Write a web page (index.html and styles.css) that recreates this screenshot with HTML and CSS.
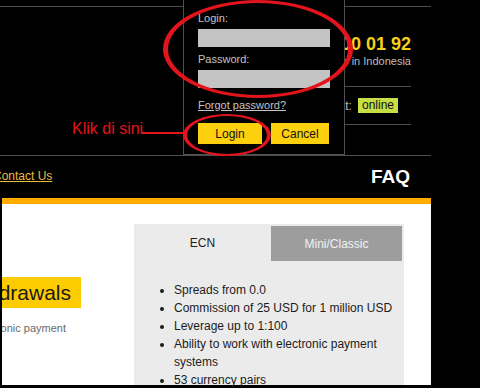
FILE: index.html
```html
<!DOCTYPE html>
<html lang="en">
<head>
    <meta charset="UTF-8">
    <meta name="viewport" content="width=device-width, initial-scale=1.0">
    <title>Login</title>
    <link rel="stylesheet" href="styles.css">
</head>
<body>
    <div class="site">
        <header class="header">
            <div class="header-top">
                <div class="info">
                    <div class="phone">8 800 200 01 92</div>
                    <div class="phone-note">Toll-free in Indonesia</div>
                    <div class="chat">Live chat: <span class="online">online</span></div>
                </div>
            </div>
            <nav class="nav">
                <a class="contact" href="#">Contact Us</a>
                <a class="faq" href="#">FAQ</a>
            </nav>

            <!-- login dropdown -->
            <form class="login-popup">
                <label class="field-label">Login:</label>
                <div class="field"></div>
                <label class="field-label second">Password:</label>
                <div class="field"></div>
                <a class="forgot" href="#">Forgot password?</a>
                <div class="login-buttons">
                    <button type="button" class="btn-login">Login</button>
                    <button type="button" class="btn-cancel">Cancel</button>
                </div>
            </form>
        </header>

        <div class="stripe"></div>

        <main class="main">
            <div class="left-col">
                <div class="title-box"><span>Withdrawals</span></div>
                <div class="title-note"><span>Deposits via electronic payment</span></div>
            </div>
            <div class="tabs">
                <div class="tab-row">
                    <div class="tab active">ECN</div>
                    <div class="tab">Mini/Classic</div>
                </div>
                <ul class="features">
                    <li>Spreads from 0.0</li>
                    <li>Commission of 25 USD for 1 million USD</li>
                    <li>Leverage up to 1:100</li>
                    <li>Ability to work with electronic payment systems</li>
                    <li>53 currency pairs</li>
                </ul>
            </div>
        </main>

        <!-- red hand-drawn annotation -->
        <svg class="marks" width="480" height="388" viewBox="0 0 480 388">
            <path fill="#e3141c" fill-rule="evenodd"
                d="M163 49 A95 49 0 1 0 353 49 A95 49 0 1 0 163 49 Z
                   M168 49 A90 46 0 1 0 348 49 A90 46 0 1 0 168 49 Z"/>
            <path fill="#e3141c" fill-rule="evenodd"
                d="M183 135 A44 21 0 1 0 271 135 A44 21 0 1 0 183 135 Z
                   M187 135 A40 19 0 1 0 267 135 A40 19 0 1 0 187 135 Z"/>
        </svg>
        <div class="klik">Klik di sini</div>
        <div class="klik-line"></div>
    </div>
</body>
</html>
```

FILE: styles.css
```css
body {
    margin: 0;
    background-color: #000;
    font-family: "Liberation Sans", Arial, sans-serif;
    width: 480px;
    height: 388px;
    overflow: hidden;
}
.site {
    position: relative;
    width: 431px;
    height: 388px;
}
.header {
    height: 192px;
    padding-top: 6px;
}
.header-top {
    height: 148px;
    border-top: 1px solid #4f4f4f;
    border-bottom: 1px solid #4f4f4f;
}
.info {
    width: 228px;
    margin-left: auto;
    margin-right: 20px;
    padding-top: 27px;
}
.phone {
    color: #f6d11a;
    font-size: 18px;
    font-weight: bold;
    line-height: 20px;
    text-align: right;
    white-space: nowrap;
}
.phone-note {
    color: #bdbdbd;
    font-size: 11px;
    line-height: 14px;
    text-align: right;
}
.chat {
    margin-top: 18px;
    height: 37px;
    border-top: 1px solid #4f4f4f;
    border-bottom: 1px solid #4f4f4f;
    display: flex;
    align-items: center;
    justify-content: flex-end;
    gap: 6px;
    padding-right: 13px;
    color: #bdbdbd;
    font-size: 12px;
}
.online {
    background-color: #c6df45;
    color: #111;
    padding: 0 4px;
    line-height: 15px;
}
.nav {
    height: 42px;
    display: flex;
    justify-content: space-between;
    padding-right: 21px;
}
.contact {
    color: #e8be3e;
    font-size: 12px;
    margin-left: -7px;
    margin-top: 13px;
}
.faq {
    color: #fff;
    font-size: 19px;
    font-weight: bold;
    text-decoration: none;
    margin-top: 10px;
}
.login-popup {
    position: absolute;
    left: 183px;
    top: 0;
    width: 146px;
    height: 154px;
    margin: 0;
    padding-left: 14px;
    background-color: #000;
    border: 1px solid #4f4f4f;
    border-top: none;
}
.field-label {
    display: block;
    color: #c4c4c4;
    font-size: 11px;
    line-height: 13px;
    margin-top: 12px;
}
.field-label.second {
    margin-top: 6px;
}
.field {
    margin-top: 4px;
    width: 132px;
    height: 18px;
    background-color: #c3c3c3;
}
.forgot {
    display: block;
    margin-top: 11px;
    color: #c4c4c4;
    font-size: 11px;
    line-height: 13px;
}
.login-buttons {
    margin-top: 11px;
    display: flex;
    gap: 9px;
}
.login-buttons button {
    height: 21px;
    border: none;
    padding: 0;
    background-color: #fcd00c;
    color: #111;
    font-family: "Liberation Sans", Arial, sans-serif;
    font-size: 12px;
}
.btn-login {
    width: 64px;
}
.btn-cancel {
    width: 58px;
}
.stripe {
    margin-left: 2px;
    height: 6px;
    background-color: #ffab00;
}
.main {
    margin-left: 2px;
    height: 181px;
    background-color: #fff;
    display: flex;
}
.left-col {
    width: 132px;
    padding-top: 73px;
}
.title-box {
    width: 69px;
    height: 31px;
    padding-right: 10px;
    background-color: #fdcc00;
    display: flex;
    justify-content: flex-end;
    align-items: center;
    overflow: hidden;
    white-space: nowrap;
    font-size: 21px;
    color: #1a1a1a;
}
.title-note {
    width: 64px;
    margin-top: 13px;
    display: flex;
    justify-content: flex-end;
    overflow: hidden;
    white-space: nowrap;
    font-size: 11px;
    line-height: 14px;
    color: #6a6a6a;
}
.tabs {
    margin-top: 20px;
    width: 270px;
    background-color: #ebebeb;
}
.tab-row {
    display: flex;
    height: 38px;
}
.tab {
    font-size: 12px;
    display: flex;
    align-items: center;
    justify-content: center;
}
.tab.active {
    width: 137px;
    color: #222;
}
.tab:not(.active) {
    flex: 1;
    margin: 2px 2px 1px 0;
    background-color: #9d9d9d;
    color: #f2f2f2;
}
.features {
    margin: 19px 0 0;
    padding-left: 40px;
    padding-right: 10px;
    font-size: 12px;
    line-height: 18px;
    color: #1c1c1c;
}
.marks {
    position: absolute;
    left: 0;
    top: 0;
    pointer-events: none;
}
.klik {
    position: absolute;
    left: 72px;
    top: 120px;
    color: #e3141c;
    font-size: 16px;
}
.klik-line {
    position: absolute;
    left: 142px;
    top: 132px;
    width: 42px;
    height: 2px;
    background-color: #e3141c;
}
```
